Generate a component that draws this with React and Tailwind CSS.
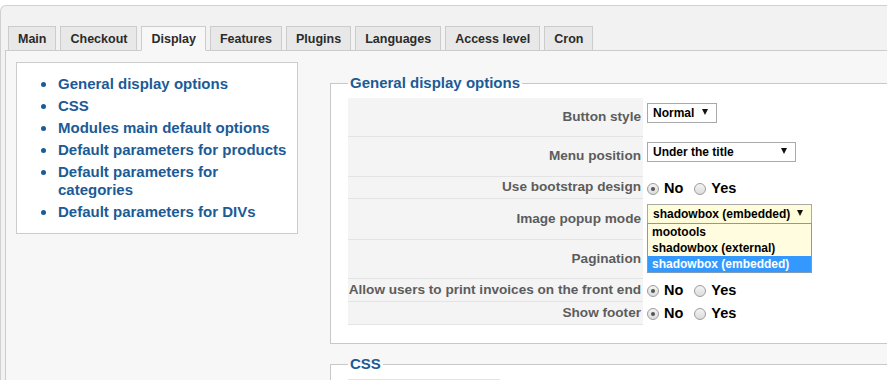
import React from "react";

const tabs = ["Main", "Checkout", "Display", "Features", "Plugins", "Languages", "Access level", "Cron"];

const links = [
  "General display options",
  "CSS",
  "Modules main default options",
  "Default parameters for products",
  "Default parameters for categories",
  "Default parameters for DIVs",
];

const Arrow = () => (
  <svg width="6" height="6" viewBox="0 0 6 6" className="absolute right-[8px] top-[5px]">
    <polygon points="0,0 6,0 3,6" fill="#111" />
  </svg>
);

const Select = ({ value, className }) => (
  <div className={`relative h-[20px] border border-[#a9a9a9] flex items-center pl-[5px] text-[12px] font-bold text-black ${className}`}>
    {value}
    <Arrow />
  </div>
);

const Radio = ({ checked }) => (
  <span className="w-[12px] h-[12px] rounded-full border border-[#9d9d9d] bg-gradient-to-b from-[#f3f3f3] to-[#dcdcdc] flex items-center justify-center shrink-0">
    {checked && <span className="w-[4px] h-[4px] rounded-full bg-[#555]" />}
  </span>
);

const YesNo = () => (
  <div className="flex items-center gap-[11px] text-[14.5px] font-bold text-black pt-px">
    <label className="flex items-center gap-[5px]">
      <Radio checked />
      No
    </label>
    <label className="flex items-center gap-[5px]">
      <Radio />
      Yes
    </label>
  </div>
);

const Row = ({ label, height, children, center }) => (
  <div className={`flex ${height}`}>
    <div className="w-[295px] shrink-0 bg-[#f4f4f4] border-b border-[#e4e4e4] flex items-center justify-end pr-[2px] text-[13.6px] font-bold text-[#5c5c5c] whitespace-nowrap">
      {label}
    </div>
    <div className={`flex-1 pl-[4px] flex ${center ? "items-center" : "items-start pt-[5px]"}`}>
      {children}
    </div>
  </div>
);

export default function App() {
  return (
    <div className="w-[887px] h-[380px] overflow-hidden bg-white font-['Liberation_Sans',Arial,sans-serif]">
      <div className="mt-[5px] h-[375px] border-t border-l border-[#d0d0d0] rounded-tl-[6px] bg-[#f2f2f2] pl-[4px] pt-[20px] flex flex-col">
        {/* Tabs */}
        <div className="flex gap-[4px] pl-[3px] -mb-px relative z-10">
          {tabs.map((t) => (
            <div
              key={t}
              className={
                t === "Display"
                  ? "h-[25px] px-[9px] pt-px flex items-center border border-[#cccccc] border-b-[#f7f7f7] bg-[#f7f7f7] text-[12.5px] font-bold text-[#2b2b2b]"
                  : "h-[25px] px-[9px] pt-px flex items-center border border-[#cccccc] bg-[#e8e8e8] text-[12.5px] font-bold text-[#2b2b2b]"
              }
            >
              {t}
            </div>
          ))}
        </div>

        {/* Panel */}
        <div className="flex-1 border-t border-l border-[#cccccc] bg-[#f7f7f7] flex items-start pt-[11px] pl-[10px]">
          {/* Left menu */}
          <div className="w-[282px] shrink-0 border border-[#cccccc] bg-white pt-[12px] pb-[12px] pl-[24px] pr-[4px]">
            <ul className="flex flex-col gap-[4px]">
              {links.map((l) => (
                <li key={l} className="flex items-start gap-[12px] text-[15px] leading-[18px] font-bold text-[#1b5b96]">
                  <span className="w-[5px] h-[5px] rounded-full bg-[#1b5b96] mt-[7px] shrink-0" />
                  <span>{l}</span>
                </li>
              ))}
            </ul>
          </div>

          {/* Right column */}
          <div className="ml-[32px] mt-[12px] w-[600px] shrink-0 flex flex-col">
            <fieldset className="border border-[#c8c8c8] bg-white pl-[17px] pt-[6px] pb-[18px]">
              <legend className="px-[2px] text-[15px] leading-[18px] font-bold text-[#1b5b96]">General display options</legend>
              <div className="w-[500px]">
                <Row label="Button style" height="h-[39px]">
                  <Select value="Normal" className="w-[70px] bg-white" />
                </Row>
                <Row label="Menu position" height="h-[40px]">
                  <Select value="Under the title" className="w-[149px] bg-white" />
                </Row>
                <Row label="Use bootstrap design" height="h-[22px]" center>
                  <YesNo />
                </Row>
                <Row label="Image popup mode" height="h-[41px]">
                  <div className="relative z-20">
                    <Select value="shadowbox (embedded)" className="w-[165px] bg-[#fffcd9]" />
                    <div className="absolute left-0 top-[19px] w-[165px] border border-[#7f9db9] bg-[#fffcdf] text-[12px] font-bold text-black">
                      <div className="h-[16px] leading-[16px] pl-[4px]">mootools</div>
                      <div className="h-[16px] leading-[16px] pl-[4px]">shadowbox (external)</div>
                      <div className="h-[16px] leading-[16px] pl-[4px] bg-[#3399ff] text-white">shadowbox (embedded)</div>
                    </div>
                  </div>
                </Row>
                <Row label="Pagination" height="h-[39px]" />
                <Row label="Allow users to print invoices on the front end" height="h-[23px]" center>
                  <YesNo />
                </Row>
                <Row label="Show footer" height="h-[23px]" center>
                  <YesNo />
                </Row>
              </div>
            </fieldset>

            <fieldset className="mt-[11px] border border-[#c8c8c8] bg-white pl-[17px] pt-[6px] pb-[18px]">
              <legend className="px-[2px] text-[15px] leading-[18px] font-bold text-[#1b5b96]">CSS</legend>
              <div className="w-[152px] h-[20px] border-t border-[#e4e4e4] bg-[#f4f4f4]" />
            </fieldset>
          </div>
        </div>
      </div>
    </div>
  );
}
